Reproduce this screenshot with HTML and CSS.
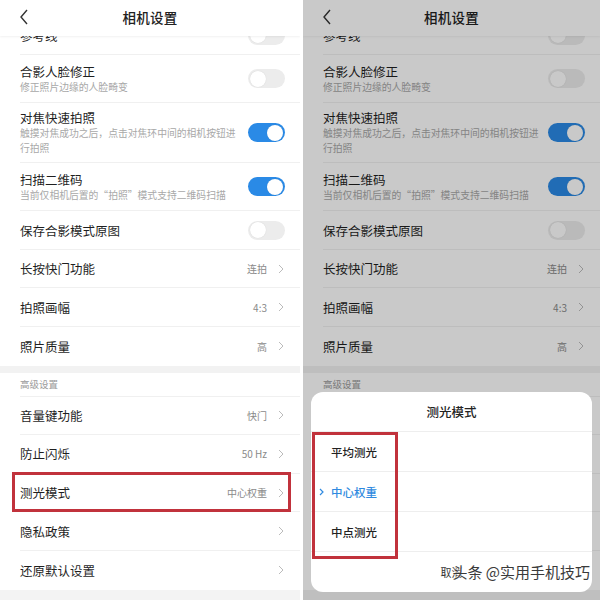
FILE: index.html
```html
<!DOCTYPE html>
<html lang="zh">
<head>
<meta charset="utf-8">
<link rel="stylesheet" href="styles.css">
</head>
<body>
<div class="screens">
  <section class="panel panel-left">
    <header class="topbar">
      <svg class="back" width="10" height="16" viewBox="0 0 10 16"><polyline points="8,1 2,8 8,15" fill="none" stroke="#333" stroke-width="1.4"/></svg>
      <h1>相机设置</h1>
    </header>
    <div class="viewport">
      <div class="list">
        <div class="row"><div class="txt"><div class="t">参考线</div></div><span class="sw"></span></div>
        <div class="row multi"><div class="txt"><div class="t">合影人脸修正</div><div class="s">修正照片边缘的人脸畸变</div></div><span class="sw"></span></div>
        <div class="row multi three"><div class="txt"><div class="t">对焦快速拍照</div><div class="s">触摸对焦成功之后，点击对焦环中间的相机按钮进行拍照</div></div><span class="sw on"></span></div>
        <div class="row multi"><div class="txt"><div class="t">扫描二维码</div><div class="s">当前仅相机后置的“拍照”模式支持二维码扫描</div></div><span class="sw on"></span></div>
        <div class="row"><div class="txt"><div class="t">保存合影模式原图</div></div><span class="sw"></span></div>
        <div class="row"><div class="txt"><div class="t">长按快门功能</div></div><span class="val">连拍</span><svg class="chev" width="6" height="10" viewBox="0 0 6 10"><polyline points="1,1 5,5 1,9" fill="none" stroke="#bbb" stroke-width="1"/></svg></div>
        <div class="row"><div class="txt"><div class="t">拍照画幅</div></div><span class="val">4:3</span><svg class="chev" width="6" height="10" viewBox="0 0 6 10"><polyline points="1,1 5,5 1,9" fill="none" stroke="#bbb" stroke-width="1"/></svg></div>
        <div class="row last"><div class="txt"><div class="t">照片质量</div></div><span class="val">高</span><svg class="chev" width="6" height="10" viewBox="0 0 6 10"><polyline points="1,1 5,5 1,9" fill="none" stroke="#bbb" stroke-width="1"/></svg></div>
        <div class="band"></div>
        <div class="section">高级设置</div>
        <div class="row"><div class="txt"><div class="t">音量键功能</div></div><span class="val">快门</span><svg class="chev" width="6" height="10" viewBox="0 0 6 10"><polyline points="1,1 5,5 1,9" fill="none" stroke="#bbb" stroke-width="1"/></svg></div>
        <div class="row"><div class="txt"><div class="t">防止闪烁</div></div><span class="val">50 Hz</span><svg class="chev" width="6" height="10" viewBox="0 0 6 10"><polyline points="1,1 5,5 1,9" fill="none" stroke="#bbb" stroke-width="1"/></svg></div>
        <div class="row"><div class="txt"><div class="t">测光模式</div></div><span class="val">中心权重</span><svg class="chev" width="6" height="10" viewBox="0 0 6 10"><polyline points="1,1 5,5 1,9" fill="none" stroke="#bbb" stroke-width="1"/></svg></div>
        <div class="row"><div class="txt"><div class="t">隐私政策</div></div><svg class="chev" width="6" height="10" viewBox="0 0 6 10"><polyline points="1,1 5,5 1,9" fill="none" stroke="#bbb" stroke-width="1"/></svg></div>
        <div class="row last"><div class="txt"><div class="t">还原默认设置</div></div><svg class="chev" width="6" height="10" viewBox="0 0 6 10"><polyline points="1,1 5,5 1,9" fill="none" stroke="#bbb" stroke-width="1"/></svg></div>
      </div>
    </div>
    <div class="mark mark-left"></div>
  </section>

  <section class="panel panel-right">
    <header class="topbar">
      <svg class="back" width="10" height="16" viewBox="0 0 10 16"><polyline points="8,1 2,8 8,15" fill="none" stroke="#333" stroke-width="1.4"/></svg>
      <h1>相机设置</h1>
    </header>
    <div class="viewport">
      <div class="list">
        <div class="row"><div class="txt"><div class="t">参考线</div></div><span class="sw"></span></div>
        <div class="row multi"><div class="txt"><div class="t">合影人脸修正</div><div class="s">修正照片边缘的人脸畸变</div></div><span class="sw"></span></div>
        <div class="row multi three"><div class="txt"><div class="t">对焦快速拍照</div><div class="s">触摸对焦成功之后，点击对焦环中间的相机按钮进行拍照</div></div><span class="sw on"></span></div>
        <div class="row multi"><div class="txt"><div class="t">扫描二维码</div><div class="s">当前仅相机后置的“拍照”模式支持二维码扫描</div></div><span class="sw on"></span></div>
        <div class="row"><div class="txt"><div class="t">保存合影模式原图</div></div><span class="sw"></span></div>
        <div class="row"><div class="txt"><div class="t">长按快门功能</div></div><span class="val">连拍</span><svg class="chev" width="6" height="10" viewBox="0 0 6 10"><polyline points="1,1 5,5 1,9" fill="none" stroke="#bbb" stroke-width="1"/></svg></div>
        <div class="row"><div class="txt"><div class="t">拍照画幅</div></div><span class="val">4:3</span><svg class="chev" width="6" height="10" viewBox="0 0 6 10"><polyline points="1,1 5,5 1,9" fill="none" stroke="#bbb" stroke-width="1"/></svg></div>
        <div class="row last"><div class="txt"><div class="t">照片质量</div></div><span class="val">高</span><svg class="chev" width="6" height="10" viewBox="0 0 6 10"><polyline points="1,1 5,5 1,9" fill="none" stroke="#bbb" stroke-width="1"/></svg></div>
        <div class="band"></div>
        <div class="section">高级设置</div>
        <div class="row"><div class="txt"><div class="t">音量键功能</div></div><span class="val">快门</span><svg class="chev" width="6" height="10" viewBox="0 0 6 10"><polyline points="1,1 5,5 1,9" fill="none" stroke="#bbb" stroke-width="1"/></svg></div>
        <div class="row"><div class="txt"><div class="t">防止闪烁</div></div><span class="val">50 Hz</span><svg class="chev" width="6" height="10" viewBox="0 0 6 10"><polyline points="1,1 5,5 1,9" fill="none" stroke="#bbb" stroke-width="1"/></svg></div>
        <div class="row"><div class="txt"><div class="t">测光模式</div></div><span class="val">中心权重</span><svg class="chev" width="6" height="10" viewBox="0 0 6 10"><polyline points="1,1 5,5 1,9" fill="none" stroke="#bbb" stroke-width="1"/></svg></div>
        <div class="row"><div class="txt"><div class="t">隐私政策</div></div><svg class="chev" width="6" height="10" viewBox="0 0 6 10"><polyline points="1,1 5,5 1,9" fill="none" stroke="#bbb" stroke-width="1"/></svg></div>
        <div class="row last"><div class="txt"><div class="t">还原默认设置</div></div><svg class="chev" width="6" height="10" viewBox="0 0 6 10"><polyline points="1,1 5,5 1,9" fill="none" stroke="#bbb" stroke-width="1"/></svg></div>
      </div>
    </div>
    <div class="dim"></div>
    <div class="sheet">
      <div class="sheet-title">测光模式</div>
      <div class="opt">平均测光</div>
      <div class="opt active"><svg class="tick" width="5" height="8" viewBox="0 0 5 8"><polyline points="1,1 4,4 1,7" fill="none" stroke="#2f8ae0" stroke-width="1.2"/></svg>中心权重</div>
      <div class="opt">中点测光</div>
      <div class="cancel">取消</div>
    </div>
    <div class="mark mark-right"></div>
    <div class="watermark">头条 @实用手机技巧</div>
  </section>
</div>
</body>
</html>
```

FILE: styles.css
```css
* { box-sizing: border-box; margin: 0; padding: 0; }
html, body { width: 600px; height: 600px; background: #fff; overflow: hidden; }
body { font-family: "Noto Sans CJK SC", "Noto Sans", sans-serif; color: #222; }

.screens { display: flex; gap: 3px; height: 600px; }

.panel { position: relative; height: 600px; background: #f3f3f3; display: flex; flex-direction: column; overflow: hidden; }
.panel-left { width: 300px; }
.panel-right { width: 297px; }

.topbar { position: relative; z-index: 2; height: 36px; flex: none; background: #fff; display: flex; align-items: center; justify-content: center; box-shadow: 0 1px 2px rgba(0,0,0,0.06); }
.topbar .back { position: absolute; left: 19px; top: 9px; }
.topbar h1 { font-size: 13.5px; font-weight: 500; color: #222; line-height: 1; letter-spacing: 0.3px; }

.viewport { flex: 1; overflow: hidden; }
.list { margin-top: -19.4px; background: #fff; }

.row { margin-left: 20px; padding-right: 15px; height: 38.6px; display: flex; align-items: center; border-bottom: 1px solid #f0f0f0; }
.row.last { border-bottom: none; }
.row.multi { height: auto; padding-top: 8px; padding-bottom: 8px; }
.row.three { padding-top: 6px; padding-bottom: 6px; }
.txt { flex: 1; min-width: 0; }
.t { font-size: 12.5px; line-height: 17px; color: #1f1f1f; }
.s { font-size: 9.8px; line-height: 14px; color: #a8a8a8; padding-right: 4px; letter-spacing: 0; }
.row.three .s { line-height: 15px; }
.val { font-size: 10px; color: #8a8a8a; margin-right: 11px; }
.chev { flex: none; margin-right: 1px; }

.sw { flex: none; position: relative; width: 37px; height: 19px; border-radius: 10px; background: #ececec; }
.sw::after { content: ""; position: absolute; left: 1.5px; top: 1.5px; width: 16px; height: 16px; border-radius: 50%; background: #fff; box-shadow: 0 0 1px rgba(0,0,0,0.15); }
.sw.on { background: #2a8ae6; }
.sw.on::after { left: auto; right: 2px; }

.band { height: 7px; background: #f2f2f2; }
.section { margin-left: 20px; height: 24px; display: flex; align-items: center; font-size: 9.5px; color: #9a9a9a; border-bottom: 1px solid #f0f0f0; }

.mark { position: absolute; border: 3px solid #c1323c; z-index: 6; }
.mark-left { left: 12px; top: 472px; width: 279px; height: 40px; }
.mark-right { left: 9px; top: 432px; width: 86px; height: 127px; }

.dim { position: absolute; inset: 0; background: rgba(0,0,0,0.21); z-index: 3; }

.sheet { position: absolute; left: 8px; right: 8px; bottom: 8px; height: 200px; background: #fff; border-radius: 12px; z-index: 4; display: flex; flex-direction: column; overflow: hidden; }
.sheet-title { height: 40px; flex: none; display: flex; align-items: center; justify-content: center; font-size: 12.5px; font-weight: 500; color: #222; border-bottom: 1px solid #eeeeee; }
.opt { height: 40px; flex: none; display: flex; align-items: center; padding-left: 20px; font-size: 11.5px; font-weight: 500; color: #222; border-bottom: 1px solid #eeeeee; position: relative; }
.opt.active { color: #2f8ae0; }
.tick { position: absolute; left: 8px; top: 16px; }
.cancel { flex: 1; display: flex; align-items: center; justify-content: center; font-size: 11px; color: #333; }

.watermark { position: absolute; right: 10px; bottom: 18px; z-index: 7; font-size: 15px; color: #3a3a3a; letter-spacing: 0; text-shadow: 0 0 2px #fff, 0 0 2px #fff; }
```
